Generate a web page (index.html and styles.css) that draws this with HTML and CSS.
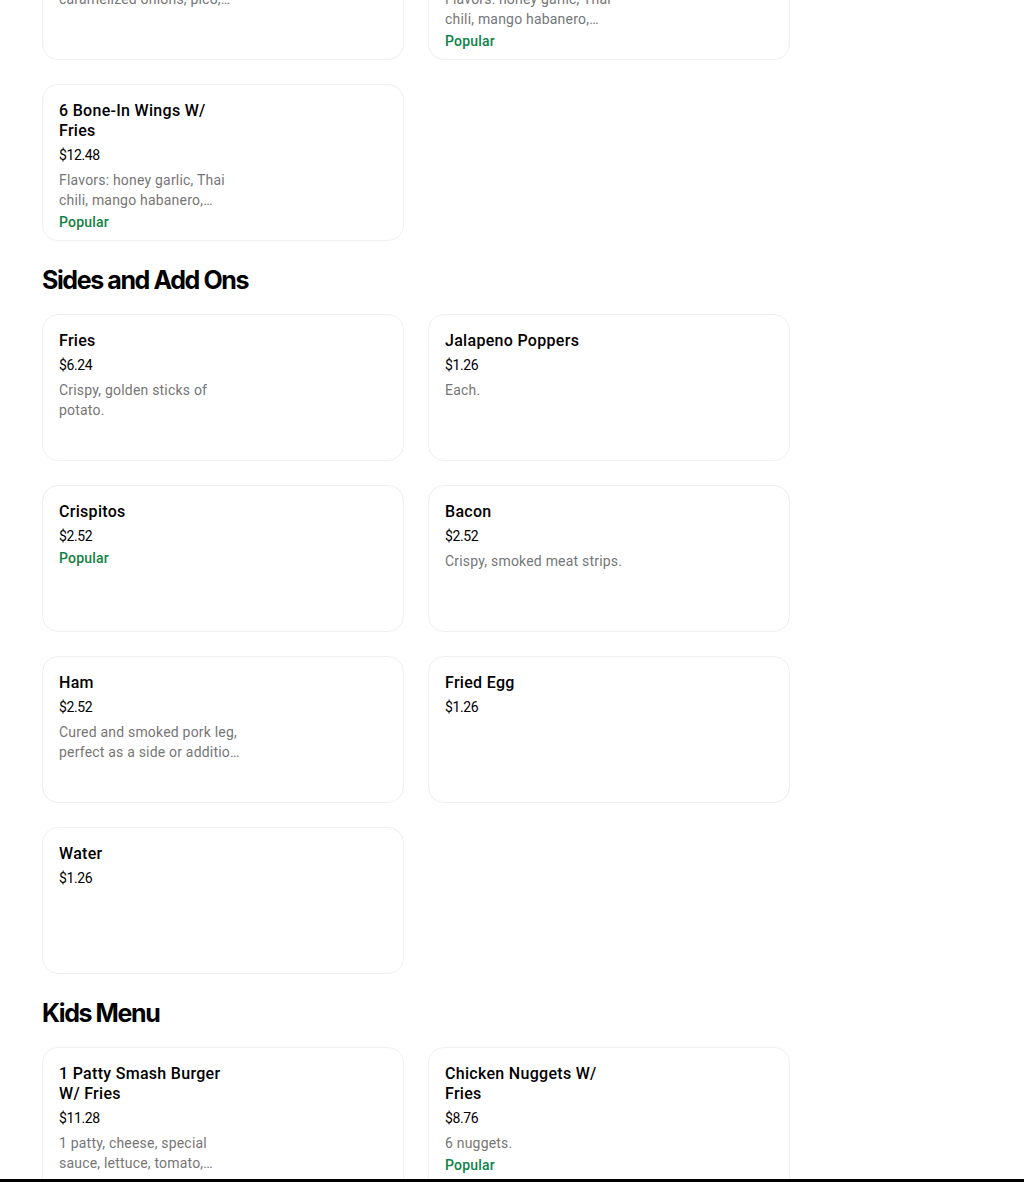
FILE: index.html
```html
<!DOCTYPE html>
<html lang="en">
<head>
<meta charset="utf-8">
<title>Menu</title>
<link rel="stylesheet" href="styles.css">
</head>
<body>
<main class="page">
  <section class="section section-first">
    <div class="grid">
      <div class="card">
        <div class="info">
          <div class="title">Loaded Fries</div>
          <div class="price">$10.08</div>
          <div class="desc">Fries topped with cheese, caramelized onions, pico, jalapenos and special sauce.</div>
        </div>
      </div>
      <div class="card">
        <div class="info">
          <div class="title">12 Bone-In Wings W/ Fries</div>
          <div class="price">$21.48</div>
          <div class="desc">Flavors: honey garlic, Thai chili, mango habanero, buffalo, lemon pepper.</div>
          <div class="tag">Popular</div>
        </div>
      </div>
      <div class="card">
        <div class="info">
          <div class="title">6 Bone-In Wings W/ Fries</div>
          <div class="price">$12.48</div>
          <div class="desc">Flavors: honey garlic, Thai chili, mango habanero, buffalo, lemon pepper.</div>
          <div class="tag">Popular</div>
        </div>
      </div>
    </div>
  </section>

  <section class="section">
    <h2 class="section-title">Sides and Add Ons</h2>
    <div class="grid">
      <div class="card">
        <div class="info">
          <div class="title">Fries</div>
          <div class="price">$6.24</div>
          <div class="desc">Crispy, golden sticks of potato.</div>
        </div>
      </div>
      <div class="card">
        <div class="info">
          <div class="title">Jalapeno Poppers</div>
          <div class="price">$1.26</div>
          <div class="desc">Each.</div>
        </div>
      </div>
      <div class="card">
        <div class="info">
          <div class="title">Crispitos</div>
          <div class="price">$2.52</div>
          <div class="tag">Popular</div>
        </div>
      </div>
      <div class="card">
        <div class="info info-wide">
          <div class="title">Bacon</div>
          <div class="price">$2.52</div>
          <div class="desc">Crispy, smoked meat strips.</div>
        </div>
      </div>
      <div class="card">
        <div class="info">
          <div class="title">Ham</div>
          <div class="price">$2.52</div>
          <div class="desc">Cured and smoked pork leg, perfect as a side or addition to any meal.</div>
        </div>
      </div>
      <div class="card">
        <div class="info">
          <div class="title">Fried Egg</div>
          <div class="price">$1.26</div>
        </div>
      </div>
      <div class="card">
        <div class="info">
          <div class="title">Water</div>
          <div class="price">$1.26</div>
        </div>
      </div>
    </div>
  </section>

  <section class="section">
    <h2 class="section-title">Kids Menu</h2>
    <div class="grid">
      <div class="card">
        <div class="info">
          <div class="title">1 Patty Smash Burger W/ Fries</div>
          <div class="price">$11.28</div>
          <div class="desc">1 patty, cheese, special sauce, lettuce, tomato, pickles and onions.</div>
        </div>
      </div>
      <div class="card">
        <div class="info">
          <div class="title">Chicken Nuggets W/ Fries</div>
          <div class="price">$8.76</div>
          <div class="desc">6 nuggets.</div>
          <div class="tag">Popular</div>
        </div>
      </div>
    </div>
  </section>
</main>
<div class="bottom-edge"></div>
</body>
</html>
```
FILE: styles.css
```css
html, body {
  margin: 0;
  padding: 0;
  background: #ffffff;
}

body {
  font-family: Roboto, "Liberation Sans", Arial, sans-serif;
  color: #000000;
  overflow: hidden;
}

.page {
  padding: 0 42px;
}

.section-first {
  margin-top: -97px;
}

.section-title {
  margin: 21px 0 16px;
  font-family: Inter, "Liberation Sans", Arial, sans-serif;
  font-weight: 700;
  font-size: 25px;
  line-height: 36px;
  letter-spacing: -1.4px;
  color: #000000;
}

.grid {
  display: grid;
  grid-template-columns: 362px 362px;
  column-gap: 24px;
  row-gap: 24px;
}

.card {
  box-sizing: border-box;
  min-height: 147px;
  padding: 16px 16px 8px;
  border: 1px solid #efefef;
  border-radius: 16px;
  background: #ffffff;
}

.info {
  width: 182px;
}

.info-wide {
  width: 200px;
}

.title {
  font-size: 16px;
  line-height: 20px;
  font-weight: 500;
  letter-spacing: 0.3px;
  color: #000000;
}

.price {
  margin-top: 4px;
  font-size: 14px;
  line-height: 20px;
  font-weight: 400;
  letter-spacing: -0.4px;
  color: #000000;
}

.desc {
  margin-top: 5px;
  font-size: 14px;
  line-height: 20px;
  letter-spacing: 0.2px;
  color: #767676;
  display: -webkit-box;
  -webkit-box-orient: vertical;
  -webkit-line-clamp: 2;
  overflow: hidden;
}

.tag {
  margin-top: 2px;
  font-size: 14px;
  line-height: 20px;
  font-weight: 500;
  letter-spacing: 0.2px;
  color: #0e8345;
}

.bottom-edge {
  position: fixed;
  left: 0;
  right: 0;
  bottom: 0;
  height: 3px;
  background: #000000;
}
```
